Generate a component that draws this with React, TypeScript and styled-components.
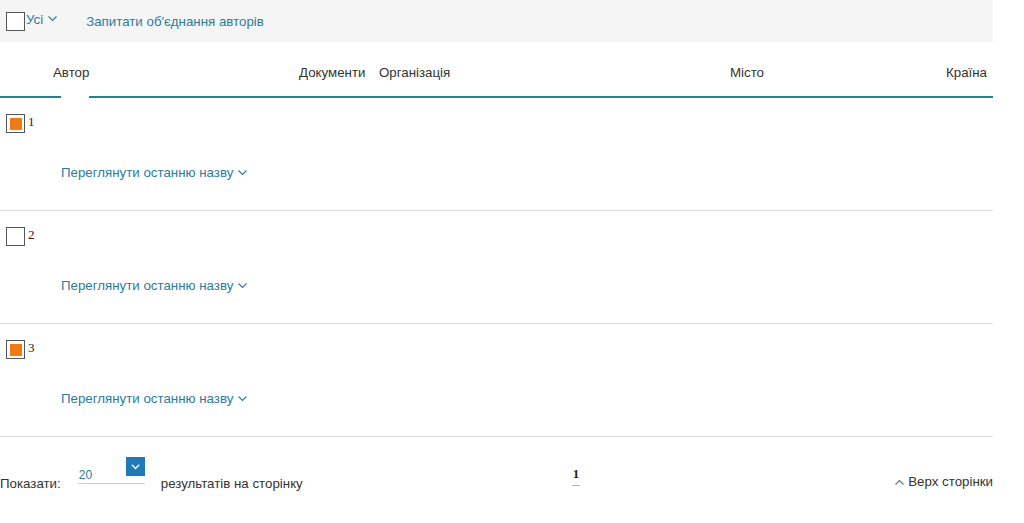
import React from "react";
import styled, { createGlobalStyle } from "styled-components";

const GlobalStyle = createGlobalStyle`
  body {
    margin: 0;
    background: #fff;
    font-family: "Liberation Sans", Arial, sans-serif;
    font-size: 13.3px;
    color: #333;
  }
`;

const Page = styled.div`
  width: 993px;
`;

const TopBar = styled.div`
  height: 42px;
  background: #f5f5f5;
  display: flex;
  align-items: center;
  padding-left: 6px;
  box-sizing: border-box;
`;

const Box = styled.span<{ $checked?: boolean }>`
  width: 17px;
  height: 17px;
  border: 1px solid #555;
  background: #fff;
  display: inline-flex;
  align-items: center;
  justify-content: center;
  flex: none;

  &::after {
    content: "";
    display: ${(p) => (p.$checked ? "block" : "none")};
    width: 12px;
    height: 12px;
    background: #f07a13;
  }
`;

const LinkText = styled.span`
  color: #2b7c9e;
  font-size: 13.3px;
  display: inline-flex;
  align-items: center;
  gap: 4px;
`;

const AllToggle = styled(LinkText)`
  margin-left: 1px;
  margin-top: -4px;
  gap: 5px;
`;

const MergeLink = styled(LinkText)`
  margin-left: 29px;
`;

const HeaderRow = styled.div`
  height: 56px;
  display: grid;
  grid-template-columns: 53px 246px 80px 351px 1fr auto;
  align-items: center;
  position: relative;
  border-bottom: 2px solid #2b7f8c;
  box-sizing: border-box;
  padding-right: 6px;
  padding-top: 6px;
  color: #333;

  &::after {
    content: "";
    position: absolute;
    left: 61px;
    bottom: -2px;
    width: 28px;
    height: 2px;
    background: #fff;
  }
`;

const HeadCell = styled.span<{ $right?: boolean }>`
  text-align: ${(p) => (p.$right ? "right" : "left")};
  white-space: nowrap;
`;

const Row = styled.div`
  height: 113px;
  border-bottom: 1px solid #ddd;
  box-sizing: border-box;
  display: flex;
  flex-direction: column;
  padding: 16px 0 0 6px;
`;

const RowHead = styled.div`
  display: flex;
  align-items: flex-start;
  gap: 3px;
`;

const Num = styled.span`
  font-family: "Liberation Serif", "Times New Roman", serif;
  font-size: 13px;
  color: #222;
`;

const RowLink = styled(LinkText)`
  margin: 32px 0 0 55px;
  gap: 5px;
`;

const Footer = styled.div`
  display: flex;
  align-items: flex-start;
  height: 86px;
  padding-top: 20px;
  box-sizing: border-box;
`;

const Label = styled.span`
  color: #333;
  font-size: 13.3px;
  margin-top: 19px;
`;

const Select = styled.div`
  width: 67px;
  margin-left: 17px;
  margin-right: 16px;
  height: 26px;
  border-bottom: 1px solid #ccc;
  display: flex;
  align-items: flex-start;
  justify-content: space-between;
`;

const SelectValue = styled.span`
  color: #2b7c9e;
  font-size: 12px;
  padding: 11px 0 0 1px;
`;

const SelectButton = styled.span`
  width: 19px;
  height: 19px;
  background: #1f7ab8;
  display: flex;
  align-items: center;
  justify-content: center;
`;

const Pages = styled.div`
  flex: 1;
  display: flex;
  padding-left: 269px;
  margin-top: 9px;
`;

const PageNum = styled.span`
  font-family: "Liberation Serif", "Times New Roman", serif;
  font-weight: bold;
  font-size: 13px;
  color: #222;
  border-bottom: 1px solid #e8a060;
  padding: 0 1px 3px;
`;

const TopLink = styled.span`
  display: inline-flex;
  align-items: center;
  gap: 4px;
  color: #333;
  font-size: 13.3px;
  margin-top: 17px;
`;

const Chevron = ({ up, color = "#2b7c9e" }: { up?: boolean; color?: string }) => (
  <svg width="9" height="6" viewBox="0 0 9 6" fill="none">
    <path
      d={up ? "M0.5 5.5 L4.5 1.5 L8.5 5.5" : "M0.5 0.5 L4.5 4.5 L8.5 0.5"}
      stroke={color}
      strokeWidth="1.1"
    />
  </svg>
);

const rows = [
  { n: 1, checked: true },
  { n: 2, checked: false },
  { n: 3, checked: true },
];

export default function App() {
  return (
    <Page>
      <GlobalStyle />
      <TopBar>
        <Box />
        <AllToggle>
          Усі <Chevron />
        </AllToggle>
        <MergeLink>Запитати об'єднання авторів</MergeLink>
      </TopBar>

      <HeaderRow>
        <span />
        <HeadCell>Автор</HeadCell>
        <HeadCell>Документи</HeadCell>
        <HeadCell>Організація</HeadCell>
        <HeadCell>Місто</HeadCell>
        <HeadCell $right>Країна</HeadCell>
      </HeaderRow>

      {rows.map((r) => (
        <Row key={r.n}>
          <RowHead>
            <Box $checked={r.checked} />
            <Num>{r.n}</Num>
          </RowHead>
          <RowLink>
            Переглянути останню назву <Chevron />
          </RowLink>
        </Row>
      ))}

      <Footer>
        <Label>Показати:</Label>
        <Select>
          <SelectValue>20</SelectValue>
          <SelectButton>
            <svg width="9" height="6" viewBox="0 0 9 6" fill="none">
              <path d="M0.8 0.8 L4.5 4.5 L8.2 0.8" stroke="#fff" strokeWidth="1.4" />
            </svg>
          </SelectButton>
        </Select>
        <Label>результатів на сторінку</Label>
        <Pages>
          <PageNum>1</PageNum>
        </Pages>
        <TopLink>
          <Chevron up color="#4a7a90" /> Верх сторінки
        </TopLink>
      </Footer>
    </Page>
  );
}
